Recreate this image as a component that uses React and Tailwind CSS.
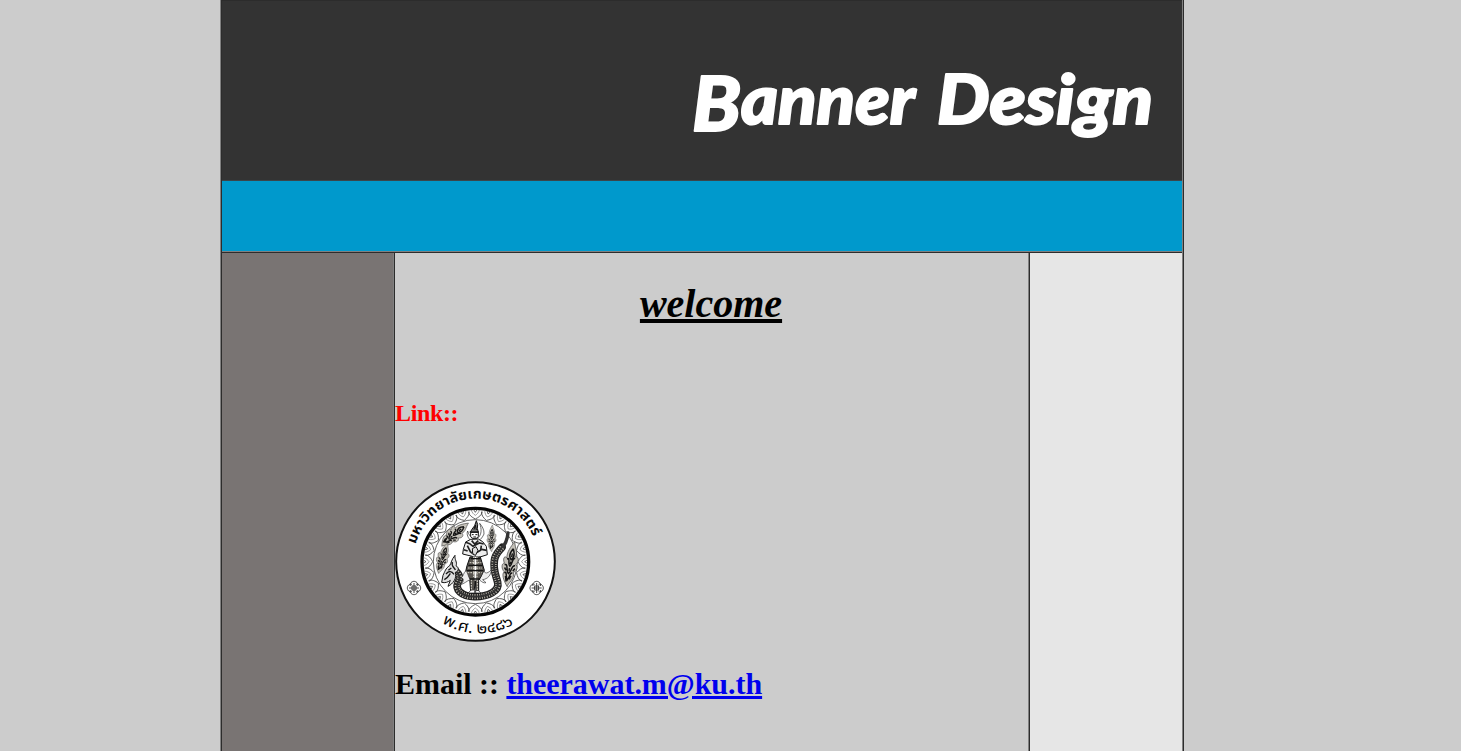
import React from "react";

const PETALS = Array.from({ length: 24 }, (_, i) => (i * 360) / 24);

const SERPENT =
  "M55 147C70 160 80 170 69 188C60 207 77 230 119 230C161 230 194 213 188 187C183 166 174 151 178 122C180 103 190 96 201 82";

function Flame({ transform }) {
  return (
    <g transform={transform}>
      <path
        d="M0-4C-7 9-14 22-11 34C-18 28-21 38-14 46C-21 46-20 58-11 64C-16 70-9 82 3 94C3 86 18 74 11 62C20 56 19 46 13 44C20 36 17 26 9 28C13 18 4 10 0-4Z"
        fill="#c4c1b9"
        stroke="#444"
        strokeWidth="1.500"
      />
      <path
        d="M-10 36C-2 30-7 46 0 50C6 44 1 32 9 31M-13 49C-4 44-8 62 0 66C8 60 2 47 12 47M-10 66C-4 60-5 76 0 80C5 72 3 62 9 64M0 12C-7 22-7 30 0 36C7 30 6 22 0 12M0 22V30M0 40V45M0 54V60M-6 72L-2 84M7 70L4 78M-12 55L-7 60M13 53L9 59"
        fill="none"
        stroke="#151515"
        strokeWidth="3.500"
      />
    </g>
  );
}

function Rosette({ x, y }) {
  return (
    <g transform={`translate(${x} ${y})`} fill="none" stroke="#222" strokeWidth="2.500">
      <rect x="-6" y="-6" width="12" height="12" />
      <path d="M-11-6C-14-14-6-20 0-20C6-20 14-14 11-6M-11 6C-14 14-6 20 0 20C6 20 14 14 11 6M-6-11C-14-14-20-6-20 0C-20 6-14 14-6 11M6-11C14-14 20-6 20 0C20 6 14 14 6 11M0-15V15M-15 0H15" />
    </g>
  );
}

function Emblem() {
  return (
    <svg viewBox="15 18 483 483" className="block h-[161px] w-[161px]" role="img">
      <defs>
        <path id="arcTop" d="M77 208A187 187 0 0 1 440 218" />
        <path id="arcBottom" d="M151 440A213 213 0 0 0 392 435" />
      </defs>
      <circle cx="256.500" cy="259.500" r="238" fill="#fff" stroke="#111" strokeWidth="6" />
      <circle cx="256" cy="260" r="160" fill="#fff" stroke="#050505" strokeWidth="10" />
      <g fill="none" stroke="#444" strokeWidth="2.400">
        {PETALS.map((a) => (
          <g key={a} transform={`translate(256 260) rotate(${a})`}>
            <path d="M-21-150C-19-139-10-133 0-128C10-133 19-139 21-150" />
            <path d="M-12-155C-10-147-5-142 0-139C5-142 10-147 12-155" strokeWidth="1.500" />
            <path d="M-5-156L0-148L5-156" />
          </g>
        ))}
        <circle cx="256" cy="260" r="126" fill="#fff" strokeWidth="2.500" />
      </g>

      <g transform="translate(135 135)">
        <Flame transform="translate(97 12) rotate(51) scale(1.200 1.080)" />
        <Flame transform="translate(37 72) rotate(18) scale(.95 .98)" />
        <Flame transform="translate(172 18) rotate(3) scale(.75 .82)" />
        <Flame transform="translate(238 70) rotate(11) scale(1.250 1.400)" />

        <g fill="none" strokeLinecap="round">
          <path d={SERPENT} stroke="#222" strokeWidth="23" />
          <path d="M198 88C210 76 217 59 219 39" stroke="#333" strokeWidth="10" />
          <path d={SERPENT} stroke="#b5b1a7" strokeWidth="16" strokeDasharray="3 4" strokeLinecap="butt" />
          <path d={SERPENT} stroke="#333" strokeWidth="6" strokeDasharray="5 3" />
        </g>
        <path d="M60 106C49 119 49 129 44 137C31 145 30 155 24 166L20 187C30 190 40 186 46 181L39 199C54 192 66 175 61 157C73 153 72 142 63 137C68 127 58 119 60 106Z" fill="#ddd" stroke="#171717" strokeWidth="3" />
        <path d="M33 162C42 151 50 153 57 163M28 179C39 173 42 166 46 160M52 126C48 140 58 142 61 150M40 151L49 144" fill="none" stroke="#171717" strokeWidth="4" />

        <path d="M98 33C94 42 98 55 111 64C125 70 139 60 147 42C148 29 141 18 134 10C141 28 139 43 131 52C120 62 103 53 98 33Z" fill="#fff" stroke="#222" strokeWidth="2" />
        <path d="M124 2L119 17L110 29L106 37L130 37L127 25L128 14Z" fill="#777" stroke="#111" strokeWidth="3" />
        <path d="M107 37H130V49C127 58 110 58 107 49Z" fill="#fff" stroke="#111" strokeWidth="3" />
        <path d="M104 36H132M111 44H116M121 44H127M115 51H123M117 29L121 15L124 30" fill="none" stroke="#111" strokeWidth="3" />
        <path d="M107 58L92 66L85 88L83 102L112 109L115 113H129L157 104L154 79L143 65L130 57Z" fill="#eee" stroke="#111" strokeWidth="3" />
        <path d="M92 67L104 71L114 79L133 69L146 72M86 89L98 93M140 88L155 91M97 77L106 95L116 103L137 91L139 77M110 62L119 72L130 62" fill="none" stroke="#222" strokeWidth="5" />
        <path d="M112 86L123 80L129 91L121 107L113 100Z" fill="#ddd" stroke="#111" strokeWidth="3" />
        <path d="M105 111H136L148 151L140 168L131 181V215H123L121 183L117 215H107L104 176L91 159L96 137Z" fill="#57544f" stroke="#111" strokeWidth="3" />
        <path d="M116 111V171M126 111V180M104 128H139M99 144L141 144M98 158L140 158M109 179V209M127 181V210" fill="none" stroke="#ddd9cf" strokeWidth="3" strokeDasharray="5 3" />
        <path d="M121 111V181" stroke="#fff" strokeWidth="5" />
        <path d="M107 116H136M100 136H143M96 152L145 152M105 177H136" fill="none" stroke="#111" strokeWidth="4" />
        <path d="M106 212L100 219H119V211M122 211V219H137L131 212Z" fill="#fff" stroke="#111" strokeWidth="2" />
        <path d="M93 152C84 159 87 168 77 175C88 171 88 187 76 194C89 191 95 183 104 180M148 152C148 164 161 159 169 149C168 166 158 177 143 179L153 188C146 190 141 186 135 181" fill="#eee" stroke="#333" strokeWidth="2" />
      </g>
      <Rosette x={72} y={339} />
      <Rosette x={440} y={339} />
      <g className="font-['Noto_Sans_Thai','Noto_Sans',sans-serif]" fill="#080808">
        <text fontSize="42" fontWeight="700">
          <textPath href="#arcTop" textLength="462" lengthAdjust="spacingAndGlyphs">มหาวิทยาลัยเกษตรศาสตร์</textPath>
        </text>
        <text fontSize="46" fontWeight="400">
          <textPath href="#arcBottom" startOffset="6" textLength="226" lengthAdjust="spacingAndGlyphs">พ.ศ. ๒๔๘๖</textPath>
        </text>
      </g>
    </svg>
  );
}

function BannerTitle() {
  return (
    <svg
      viewBox="0 0 500 122"
      className="block h-[122px] w-[500px] overflow-visible font-['Lato',sans-serif]"
      fill="#fff"
      stroke="#fff"
      strokeWidth="2"
      strokeLinejoin="round"
      fontWeight="900"
      fontStyle="italic"
    >
      <text x="10" y="72" fontSize="77" textLength="49" lengthAdjust="spacingAndGlyphs">B</text>
      <text x="59" y="65" fontSize="69" textLength="174" lengthAdjust="spacingAndGlyphs">anner</text>
      <text x="255" y="65" fontSize="68" textLength="216" lengthAdjust="spacingAndGlyphs">Design</text>
    </svg>
  );
}

export default function App() {
  return (
    <div className="h-[751px] w-full overflow-hidden bg-[#cccccc] pl-[220px] font-['Liberation_Serif',serif] text-black">
      <div className="flex h-full w-[964px] flex-col border-r border-l border-r-[#2c2c2c] border-l-[#808080]">
        <div className="flex h-full flex-col border-r border-l border-r-[#808080] border-l-[#2c2c2c]">
          <header className="flex h-[181px] shrink-0 justify-end border-t border-b border-t-[#2c2c2c] border-b-[#3b454a] bg-[#333333] pt-[58px]">
            <BannerTitle />
          </header>
          <nav className="h-[71px] shrink-0 border-b border-[#808080] bg-[#0099cc]" />
          <div className="flex min-h-0 flex-1 border-t border-[#2c2c2c]">
            <aside className="w-[172px] shrink-0 border-r border-[#808080] bg-[#797473]" />
            <main className="w-[635px] shrink-0 border-r border-l border-r-[#808080] border-l-[#2c2c2c]">
              <h1 className="mt-[28px] pr-px text-center text-[40px] leading-[46px] font-bold italic underline">welcome</h1>
              <h2 className="mt-[72px] text-[24px] leading-[28px] font-bold tracking-[-0.35px] text-[#ff0000]">Link::</h2>
              <div className="mt-[54px]">
                <Emblem />
              </div>
              <p className="mt-[25px] text-[30px] leading-[34px] font-bold tracking-[-0.03px]">
                Email :: <a href="mailto:theerawat.m@ku.th" className="text-[#0000ee] underline">theerawat.m@ku.th</a>
              </p>
            </main>
            <aside className="flex-1 border-l border-[#2c2c2c] bg-[#e6e6e6]" />
          </div>
        </div>
      </div>
    </div>
  );
}
